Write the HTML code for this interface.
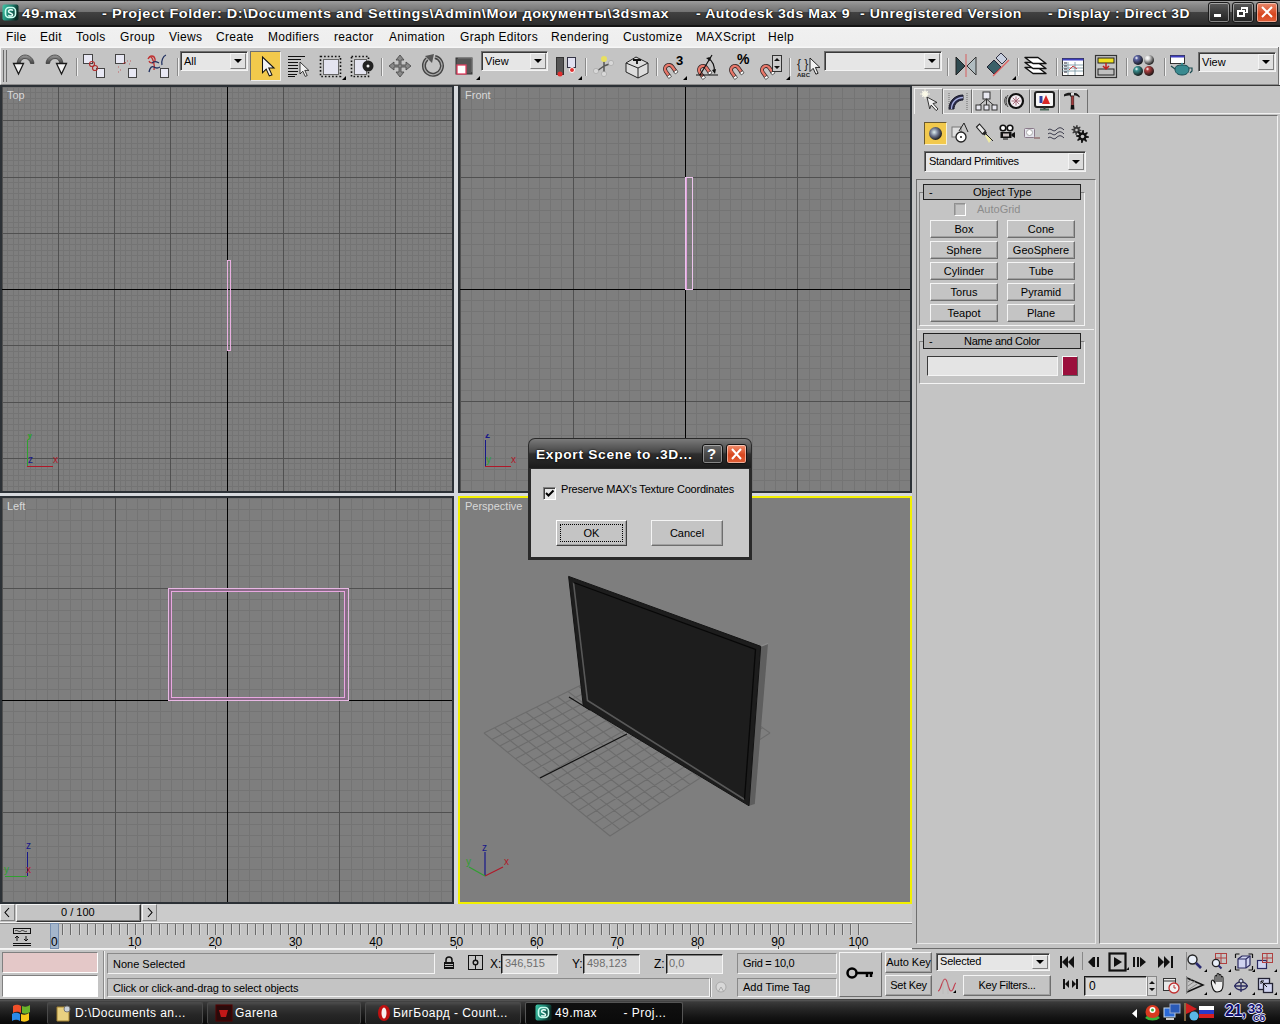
<!DOCTYPE html><html><head><meta charset="utf-8"><style>
html,body{margin:0;padding:0;width:1280px;height:1024px;overflow:hidden;background:#c4c4c4;font-family:"Liberation Sans", sans-serif;position:relative}
div{box-sizing:border-box}
.btn{position:absolute;background:#c4c4c4;border:1px solid;border-color:#f4f4f4 #6e6e6e #6e6e6e #f4f4f4;box-shadow:inset -1px -1px 0 #a0a0a0;font-size:11px;text-align:center;color:#000;white-space:pre}
.sunk{position:absolute;border:1px solid;border-color:#808080 #ffffff #ffffff #808080;box-shadow:inset 1px 1px 0 #404040}
</style></head><body>
<div style="position:absolute;left:0px;top:0px;width:1280px;height:27px;background:linear-gradient(#111 0px,#111 1px,#9c9c9c 1px,#8a8a8a 5px,#727272 12px,#424242 12px,#2c2c2c 25px,#141414 25px,#141414 27px)"></div>
<svg style="position:absolute;left:2px;top:4px" width="17" height="17"><defs><linearGradient id="ai" x1="0" y1="0" x2="1" y2="0.3"><stop offset="0" stop-color="#40c8a8"/><stop offset="0.6" stop-color="#1a7a6a"/><stop offset="1" stop-color="#0a2a24"/></linearGradient></defs><rect x="0.5" y="0.5" width="16" height="16" rx="2" fill="url(#ai)"/><rect x="3.5" y="3.5" width="10" height="10" rx="3.5" fill="none" stroke="#c8fff0" stroke-width="1.6"/><path d="M11 6.5c-1-1-4-1-4.5 0.8s3.5 1.5 4 3.2-2.5 2-4.2 0.8" fill="none" stroke="#e8fff8" stroke-width="1.5"/></svg>
<div style="position:absolute;left:22px;top:7px;font-size:13px;font-weight:700;color:#fff;white-space:pre;line-height:14px;letter-spacing:0.5px;text-shadow:0 0 1px #000,0 0 2px #000;transform-origin:0 0;transform:scaleX(1.16)">49.max</div>
<div style="position:absolute;left:102px;top:7px;font-size:13px;font-weight:700;color:#fff;white-space:pre;line-height:14px;letter-spacing:0.5px;text-shadow:0 0 1px #000,0 0 2px #000;transform-origin:0 0;transform:scaleX(1.112)">- Project Folder: D:\Documents and Settings\Admin\Мои документы\3dsmax</div>
<div style="position:absolute;left:696px;top:7px;font-size:13px;font-weight:700;color:#fff;white-space:pre;line-height:14px;letter-spacing:0.5px;text-shadow:0 0 1px #000,0 0 2px #000;transform-origin:0 0;transform:scaleX(1.081)">- Autodesk 3ds Max 9</div>
<div style="position:absolute;left:860px;top:7px;font-size:13px;font-weight:700;color:#fff;white-space:pre;line-height:14px;letter-spacing:0.5px;text-shadow:0 0 1px #000,0 0 2px #000;transform-origin:0 0;transform:scaleX(1.082)">- Unregistered Version</div>
<div style="position:absolute;left:1048px;top:7px;font-size:13px;font-weight:700;color:#fff;white-space:pre;line-height:14px;letter-spacing:0.5px;text-shadow:0 0 1px #000,0 0 2px #000;transform-origin:0 0;transform:scaleX(1.065)">- Display : Direct 3D</div>
<div style="position:absolute;left:1208px;top:2px;width:22px;height:21px;background:linear-gradient(#5a5a5a,#3a3a3a 50%,#222);border:1px solid #1a1a1a;border-radius:3px;box-shadow:inset 0 0 0 1px rgba(255,255,255,0.45)"><div style="position:absolute;left:5px;top:11px;width:7px;height:3px;background:#fff"></div></div>
<div style="position:absolute;left:1232px;top:2px;width:22px;height:21px;background:linear-gradient(#5a5a5a,#3a3a3a 50%,#222);border:1px solid #1a1a1a;border-radius:3px;box-shadow:inset 0 0 0 1px rgba(255,255,255,0.45)"><div style="position:absolute;left:8px;top:4px;width:7px;height:6px;border:2px solid #fff;border-left-width:1px;border-bottom-width:1px"></div><div style="position:absolute;left:4px;top:7px;width:8px;height:7px;border:2px solid #fff;border-top-width:2px;background:#333"></div></div>
<div style="position:absolute;left:1256px;top:2px;width:22px;height:21px;background:linear-gradient(#e88a6e,#d8461e 60%,#e0603a);border:1px solid #1a1a1a;border-radius:3px;box-shadow:inset 0 0 0 1px rgba(255,255,255,0.45)"><svg width="21" height="20" style="position:absolute;left:0;top:0"><path d="M5 4L15 14M15 4L5 14" stroke="#fff" stroke-width="2"/></svg></div>
<div style="position:absolute;left:0px;top:27px;width:1280px;height:21px;background:linear-gradient(#fafafa 0px,#f0f0f0 2px,#eeeeee 19px,#f6f6f6 20px)"></div>
<div style="position:absolute;left:6px;top:31px;font-size:12px;color:#000;font-weight:400;white-space:pre;line-height:1;letter-spacing:0.3px">File</div>
<div style="position:absolute;left:40px;top:31px;font-size:12px;color:#000;font-weight:400;white-space:pre;line-height:1;letter-spacing:0.3px">Edit</div>
<div style="position:absolute;left:76px;top:31px;font-size:12px;color:#000;font-weight:400;white-space:pre;line-height:1;letter-spacing:0.3px">Tools</div>
<div style="position:absolute;left:120px;top:31px;font-size:12px;color:#000;font-weight:400;white-space:pre;line-height:1;letter-spacing:0.3px">Group</div>
<div style="position:absolute;left:169px;top:31px;font-size:12px;color:#000;font-weight:400;white-space:pre;line-height:1;letter-spacing:0.3px">Views</div>
<div style="position:absolute;left:216px;top:31px;font-size:12px;color:#000;font-weight:400;white-space:pre;line-height:1;letter-spacing:0.3px">Create</div>
<div style="position:absolute;left:268px;top:31px;font-size:12px;color:#000;font-weight:400;white-space:pre;line-height:1;letter-spacing:0.3px">Modifiers</div>
<div style="position:absolute;left:334px;top:31px;font-size:12px;color:#000;font-weight:400;white-space:pre;line-height:1;letter-spacing:0.3px">reactor</div>
<div style="position:absolute;left:389px;top:31px;font-size:12px;color:#000;font-weight:400;white-space:pre;line-height:1;letter-spacing:0.3px">Animation</div>
<div style="position:absolute;left:460px;top:31px;font-size:12px;color:#000;font-weight:400;white-space:pre;line-height:1;letter-spacing:0.3px">Graph Editors</div>
<div style="position:absolute;left:551px;top:31px;font-size:12px;color:#000;font-weight:400;white-space:pre;line-height:1;letter-spacing:0.3px">Rendering</div>
<div style="position:absolute;left:623px;top:31px;font-size:12px;color:#000;font-weight:400;white-space:pre;line-height:1;letter-spacing:0.3px">Customize</div>
<div style="position:absolute;left:696px;top:31px;font-size:12px;color:#000;font-weight:400;white-space:pre;line-height:1;letter-spacing:0.3px">MAXScript</div>
<div style="position:absolute;left:768px;top:31px;font-size:12px;color:#000;font-weight:400;white-space:pre;line-height:1;letter-spacing:0.3px">Help</div>
<div style="position:absolute;left:0px;top:48px;width:1280px;height:37px;background:#c4c4c4;border-left:1px solid #f4f4f4;border-bottom:1px solid #8c8c8c"></div>
<div style="position:absolute;left:1278px;top:47px;width:1px;height:38px;background:#707070"></div>
<div style="position:absolute;left:1279px;top:47px;width:1px;height:38px;background:#f0f0f0"></div>
<div style="position:absolute;left:3px;top:50px;width:1px;height:32px;background:#6a6a6a"></div>
<div style="position:absolute;left:6px;top:50px;width:1px;height:32px;background:#6a6a6a"></div>
<div style="position:absolute;left:76px;top:58px;width:1px;height:18px;background:#8a8a8a;box-shadow:1px 0 0 #f0f0f0"></div>
<div style="position:absolute;left:177px;top:58px;width:1px;height:18px;background:#8a8a8a;box-shadow:1px 0 0 #f0f0f0"></div>
<div style="position:absolute;left:381px;top:58px;width:1px;height:18px;background:#8a8a8a;box-shadow:1px 0 0 #f0f0f0"></div>
<div style="position:absolute;left:585px;top:58px;width:1px;height:18px;background:#8a8a8a;box-shadow:1px 0 0 #f0f0f0"></div>
<div style="position:absolute;left:656px;top:58px;width:1px;height:18px;background:#8a8a8a;box-shadow:1px 0 0 #f0f0f0"></div>
<div style="position:absolute;left:789px;top:58px;width:1px;height:18px;background:#8a8a8a;box-shadow:1px 0 0 #f0f0f0"></div>
<div style="position:absolute;left:947px;top:58px;width:1px;height:18px;background:#8a8a8a;box-shadow:1px 0 0 #f0f0f0"></div>
<div style="position:absolute;left:1017px;top:58px;width:1px;height:18px;background:#8a8a8a;box-shadow:1px 0 0 #f0f0f0"></div>
<div style="position:absolute;left:1056px;top:58px;width:1px;height:18px;background:#8a8a8a;box-shadow:1px 0 0 #f0f0f0"></div>
<div style="position:absolute;left:1126px;top:58px;width:1px;height:18px;background:#8a8a8a;box-shadow:1px 0 0 #f0f0f0"></div>
<div style="position:absolute;left:1164px;top:58px;width:1px;height:18px;background:#8a8a8a;box-shadow:1px 0 0 #f0f0f0"></div>
<div style="position:absolute;left:180px;top:51px;width:68px;height:20px;background:#e6e6e6;border:1px solid;border-color:#6e6e6e #f4f4f4 #f4f4f4 #6e6e6e;box-shadow:inset 1px 1px 0 #3a3a3a"></div>
<div style="position:absolute;left:184px;top:56px;font-size:11px;color:#000;font-weight:400;white-space:pre;line-height:1;">All</div>
<div style="position:absolute;left:230px;top:53px;width:16px;height:16px;background:#e0e0e0;border:1px solid;border-color:#f4f4f4 #808080 #808080 #f4f4f4"><svg width="14" height="14" style="position:absolute;left:0;top:0"><path d="M3 5h8l-4 4z" fill="#000"/></svg></div>
<div style="position:absolute;left:481px;top:51px;width:67px;height:20px;background:#e6e6e6;border:1px solid;border-color:#6e6e6e #f4f4f4 #f4f4f4 #6e6e6e;box-shadow:inset 1px 1px 0 #3a3a3a"></div>
<div style="position:absolute;left:485px;top:56px;font-size:11px;color:#000;font-weight:400;white-space:pre;line-height:1;">View</div>
<div style="position:absolute;left:530px;top:53px;width:16px;height:16px;background:#e0e0e0;border:1px solid;border-color:#f4f4f4 #808080 #808080 #f4f4f4"><svg width="14" height="14" style="position:absolute;left:0;top:0"><path d="M3 5h8l-4 4z" fill="#000"/></svg></div>
<div style="position:absolute;left:824px;top:51px;width:118px;height:20px;background:#e6e6e6;border:1px solid;border-color:#6e6e6e #f4f4f4 #f4f4f4 #6e6e6e;box-shadow:inset 1px 1px 0 #3a3a3a"></div>
<div style="position:absolute;left:924px;top:53px;width:16px;height:16px;background:#e0e0e0;border:1px solid;border-color:#f4f4f4 #808080 #808080 #f4f4f4"><svg width="14" height="14" style="position:absolute;left:0;top:0"><path d="M3 5h8l-4 4z" fill="#000"/></svg></div>
<div style="position:absolute;left:1198px;top:52px;width:78px;height:20px;background:#e6e6e6;border:1px solid;border-color:#6e6e6e #f4f4f4 #f4f4f4 #6e6e6e;box-shadow:inset 1px 1px 0 #3a3a3a"></div>
<div style="position:absolute;left:1202px;top:57px;font-size:11px;color:#000;font-weight:400;white-space:pre;line-height:1;">View</div>
<div style="position:absolute;left:1258px;top:54px;width:16px;height:16px;background:#e0e0e0;border:1px solid;border-color:#f4f4f4 #808080 #808080 #f4f4f4"><svg width="14" height="14" style="position:absolute;left:0;top:0"><path d="M3 5h8l-4 4z" fill="#000"/></svg></div>
<div style="position:absolute;left:250px;top:51px;width:31px;height:30px;background:#f2c94c;border-left:1px solid #6f6f6f;border-top:1px solid #6f6f6f;border-right:1px solid #eee;border-bottom:1px solid #eee"></div>
<svg style="position:absolute;left:0;top:47px" width="1280" height="38"><path d="M346 29v4h-4z" fill="#000"/><path d="M480 29v4h-4z" fill="#000"/><path d="M582 29v4h-4z" fill="#000"/><path d="M687 29v4h-4z" fill="#000"/><path d="M790 29v4h-4z" fill="#000"/><path d="M1016 29v4h-4z" fill="#000"/><g transform="translate(13,0)"><defs><linearGradient id="ag13" x1="0" y1="0" x2="0" y2="1"><stop offset="0" stop-color="#9a9a9a"/><stop offset="1" stop-color="#3a3a3a"/></linearGradient></defs><path d="M4 17.5c0-6 4-9.5 8-9.5s8.5 3 9 8.5h-3.5c-0.5-3-2.5-5-5.5-5s-4.5 2-5 6z" fill="url(#ag13)" stroke="#333" stroke-width="0.7"/><path d="M0.5 16.5h10l-5 10.5z" fill="#f2f2f2" stroke="#1a1a1a" stroke-width="1.3" stroke-linejoin="miter"/></g><g transform="translate(45,0) translate(22,0) scale(-1,1)"><defs><linearGradient id="ag45" x1="0" y1="0" x2="0" y2="1"><stop offset="0" stop-color="#9a9a9a"/><stop offset="1" stop-color="#3a3a3a"/></linearGradient></defs><path d="M4 17.5c0-6 4-9.5 8-9.5s8.5 3 9 8.5h-3.5c-0.5-3-2.5-5-5.5-5s-4.5 2-5 6z" fill="url(#ag45)" stroke="#333" stroke-width="0.7"/><path d="M0.5 16.5h10l-5 10.5z" fill="#f2f2f2" stroke="#1a1a1a" stroke-width="1.3" stroke-linejoin="miter"/></g><g><rect x="83.5" y="7.5" width="9" height="9" fill="#e8e8f4" stroke="#444"/><rect x="96.5" y="21.5" width="8" height="9" fill="#e8e8f4" stroke="#444"/><circle cx="92" cy="17" r="2.5" fill="none" stroke="#b03030" stroke-width="1.2"/><circle cx="95" cy="21" r="2.5" fill="none" stroke="#b03030" stroke-width="1.2"/></g><g><rect x="115.5" y="7.5" width="9" height="9" fill="#e8e8f4" stroke="#444"/><rect x="128.5" y="21.5" width="8" height="9" fill="#e8e8f4" stroke="#444"/><path d="M123 17a2 2 0 0 1 3 -1" stroke="#a03030" fill="none"/><path d="M127 14h1M130 14h1M129 17h1M118 20h1M120 23h1M118 25h1" stroke="#c06060"/></g><g fill="none" stroke-width="1.3"><path d="M148 12c2-4 6-4 7 0s-5 5-6 2M150 9c3 2 5 8 4 14" stroke="#c03030"/><path d="M149 25c1-5 3-6 5-5s3 2 6 0M152 16c3-3 5-1 7 0M162 18c-1-4 1-9 4-10" stroke="#203060"/></g><rect x="160.5" y="21.5" width="8" height="9" fill="#e8e8f4" stroke="#444"/><path transform="translate(262.5,10) scale(1.05)" d="M0 0l0 15 3.5-3.5 3 6.5 2.5-1-3-6.5h5z" fill="#f2f2f2" stroke="#111" stroke-width="1"/><path d="M288 9.5h17M288 12.5h13M288 15.5h10M288 18.5h10M288 21.5h10M288 24.5h10M288 27.5h9M288 29.5h7" stroke="#111" stroke-width="1.2"/><path transform="translate(300,15) scale(0.8)" d="M0 0l0 15 3.5-3.5 3 6.5 2.5-1-3-6.5h5z" fill="#f2f2f2" stroke="#111" stroke-width="1"/><rect x="320.5" y="9.5" width="20" height="20" fill="none" stroke="#111" stroke-width="1.6" stroke-dasharray="1.6 2"/><rect x="323.5" y="12.5" width="15" height="15" fill="#e4e4f0" stroke="#666"/><rect x="351.5" y="9.5" width="17" height="20" fill="none" stroke="#111" stroke-width="1.6" stroke-dasharray="1.6 2"/><rect x="354.5" y="12.5" width="12" height="15" fill="#e4e4f0" stroke="#666"/><circle cx="368" cy="19" r="5.5" fill="#222"/><circle cx="368" cy="19" r="1.5" fill="#eee"/><g fill="#888" stroke="#444" stroke-width="0.8"><path d="M400 8l-4 5h3v5h-5v-3l-5 4 5 4v-3h5v5h-3l4 5 4-5h-3v-5h5v3l5-4-5-4v3h-5v-5h3z"/></g><path d="M427 12a9 9 0 1 0 8 -2" fill="none" stroke="#444" stroke-width="4"/><path d="M427 12a9 9 0 1 0 8 -2" fill="none" stroke="#aaa" stroke-width="1.2"/><path d="M425 9l9-2-2 9z" fill="#555"/><rect x="456" y="11" width="16" height="16" fill="#555" stroke="#333"/><path d="M458 11h14v14" fill="none" stroke="#888"/><rect x="457" y="18" width="9" height="9" fill="#fff" stroke="#e04060" stroke-width="1.3"/><rect x="556.5" y="10.5" width="7" height="17" fill="#555" stroke="#333"/><rect x="567.5" y="10.5" width="8" height="10" fill="#e0e0f0" stroke="#334"/><circle cx="560" cy="27" r="2.5" fill="#e03030"/><circle cx="572" cy="23" r="2.5" fill="#e03030" stroke="#fff"/><g stroke="#555" stroke-width="1.5"><path d="M604 19l-7 5M604 19l8-3M604 19v7M604 19v-6"/></g><circle cx="604" cy="12" r="3" fill="#e8e060"/><circle cx="596" cy="24" r="2.6" fill="#d8d8d8" stroke="#999" stroke-width="0.5"/><circle cx="611" cy="16" r="2.6" fill="#d8d8d8" stroke="#999" stroke-width="0.5"/><circle cx="604" cy="27" r="2.6" fill="#d8d8d8" stroke="#999" stroke-width="0.5"/><path d="M626 16l10-6 12 6v10l-10 5-12-6z" fill="#ddd" stroke="#222"/><path d="M626 16l12 5 10-5M638 21v10" fill="none" stroke="#222"/><path d="M633 13h8M637 13v4" stroke="#111" stroke-width="1.8"/><g transform="translate(661,13) rotate(-35 8 9)"><path d="M4 15v-6a4 4 0 0 1 8 0v6" fill="none" stroke="#3a2a2a" stroke-width="4"/><path d="M4 15v-6a4 4 0 0 1 8 0v6" fill="none" stroke="#e8786a" stroke-width="2.4"/><rect x="2.3" y="14" width="3.4" height="2.6" fill="#fff" stroke="#222" stroke-width="0.6"/><rect x="10.3" y="14" width="3.4" height="2.6" fill="#fff" stroke="#222" stroke-width="0.6"/></g><text x="676" y="18" font-size="13" font-weight="700" font-family="Liberation Sans" fill="#000">3</text><g transform="translate(695,14) rotate(-35 8 9)"><path d="M4 15v-6a4 4 0 0 1 8 0v6" fill="none" stroke="#3a2a2a" stroke-width="4"/><path d="M4 15v-6a4 4 0 0 1 8 0v6" fill="none" stroke="#e8786a" stroke-width="2.4"/><rect x="2.3" y="14" width="3.4" height="2.6" fill="#fff" stroke="#222" stroke-width="0.6"/><rect x="10.3" y="14" width="3.4" height="2.6" fill="#fff" stroke="#222" stroke-width="0.6"/></g><path d="M696 28h22M700 28l12-20M708 11a13 13 0 0 1 6 14" fill="none" stroke="#111" stroke-width="1.2"/><path d="M706 11l5-1-1 4zM712 23l3 4 1-5z" fill="#111"/><g transform="translate(727,14) rotate(-35 8 9)"><path d="M4 15v-6a4 4 0 0 1 8 0v6" fill="none" stroke="#3a2a2a" stroke-width="4"/><path d="M4 15v-6a4 4 0 0 1 8 0v6" fill="none" stroke="#e8786a" stroke-width="2.4"/><rect x="2.3" y="14" width="3.4" height="2.6" fill="#fff" stroke="#222" stroke-width="0.6"/><rect x="10.3" y="14" width="3.4" height="2.6" fill="#fff" stroke="#222" stroke-width="0.6"/></g><text x="737" y="17" font-size="14" font-weight="700" font-family="Liberation Sans" fill="#000">%</text><g transform="translate(758,14) rotate(-35 8 9)"><path d="M4 15v-6a4 4 0 0 1 8 0v6" fill="none" stroke="#3a2a2a" stroke-width="4"/><path d="M4 15v-6a4 4 0 0 1 8 0v6" fill="none" stroke="#e8786a" stroke-width="2.4"/><rect x="2.3" y="14" width="3.4" height="2.6" fill="#fff" stroke="#222" stroke-width="0.6"/><rect x="10.3" y="14" width="3.4" height="2.6" fill="#fff" stroke="#222" stroke-width="0.6"/></g><rect x="772.5" y="8.5" width="9" height="16" fill="#ccc" stroke="#333"/><path d="M774 14l3-3 3 3zM774 19l3 3 3-3z" fill="#111"/><text x="797" y="21" font-size="12" font-family="Liberation Sans" fill="#222">{ }</text><text x="797" y="30" font-size="6" font-weight="700" font-family="Liberation Sans" fill="#222">ABC</text><path transform="translate(810,11) scale(0.9)" d="M0 0l0 15 3.5-3.5 3 6.5 2.5-1-3-6.5h5z" fill="#f2f2f2" stroke="#111" stroke-width="1"/><path d="M956 10l9 9-9 9z" fill="#2f4a50" stroke="#222"/><path d="M976 10l-9 9 9 9z" fill="#b0bcc0" stroke="#333"/><path d="M966 7v23" stroke="#d08080" stroke-width="1.5"/><path d="M987 20l7-7 7 7-7 7z" fill="#3a6068" stroke="#223"/><path d="M996 11l5-5 6 6-5 5z" fill="#c8d0e0" stroke="#334"/><path d="M993 29l16-16" stroke="#e06060" stroke-width="1.2"/><g fill="#fff" stroke="#111" stroke-width="1.4" stroke-linejoin="round"><path d="M1025 20.5h13l8 6h-13z"/><path d="M1025 15.5h13l8 6h-13z"/><path d="M1025 10.5h13l8 6h-13z"/></g><rect x="1062.5" y="11.5" width="21" height="17" fill="#fff" stroke="#333"/><rect x="1062.5" y="11.5" width="21" height="2" fill="#4040c0"/><path d="M1068 15v13M1075 15v13M1062 18h21M1062 21h21M1062 24h21" stroke="#7090a0" stroke-width="0.8"/><path d="M1069 23l4-4 4 3" stroke="#d04040" fill="none"/><path d="M1064 16h3M1064 19h3M1064 22h3M1064 25h3" stroke="#223" stroke-width="1.2"/><rect x="1095.5" y="8.5" width="21" height="22" fill="none" stroke="#333" stroke-width="1.2"/><rect x="1098" y="11" width="16" height="5" fill="#f0e020" stroke="#222"/><rect x="1098" y="22" width="16" height="6" fill="#c0c0c0" stroke="#222"/><path d="M1106 16v5M1103 19l3 3 3-3" stroke="#c02020" stroke-width="1.5" fill="none"/><defs><radialGradient id="ms0" cx="0.35" cy="0.3" r="0.75"><stop offset="0" stop-color="#fff"/><stop offset="0.25" stop-color="#5a62a0"/><stop offset="1" stop-color="#111"/></radialGradient><radialGradient id="ms1" cx="0.35" cy="0.3" r="0.75"><stop offset="0" stop-color="#fff"/><stop offset="0.25" stop-color="#e0e0e0"/><stop offset="1" stop-color="#111"/></radialGradient><radialGradient id="ms2" cx="0.35" cy="0.3" r="0.75"><stop offset="0" stop-color="#fff"/><stop offset="0.25" stop-color="#3a9090"/><stop offset="1" stop-color="#111"/></radialGradient><radialGradient id="ms3" cx="0.35" cy="0.3" r="0.75"><stop offset="0" stop-color="#fff"/><stop offset="0.25" stop-color="#b04040"/><stop offset="1" stop-color="#111"/></radialGradient></defs><circle cx="1138" cy="13" r="5" fill="url(#ms0)"/><circle cx="1149" cy="13" r="5" fill="url(#ms1)"/><circle cx="1138" cy="24" r="5" fill="url(#ms2)"/><circle cx="1149" cy="24" r="5" fill="url(#ms3)"/><rect x="1170.5" y="8.5" width="14" height="8" fill="#fff" stroke="#333"/><rect x="1170.5" y="8.5" width="14" height="2" fill="#4040c0"/><path d="M1175 22c0-3 3-4 7-4s7 1 7 4c0 4-3 6-7 6s-7-2-7-6z" fill="#3a8a90" stroke="#1a4a50"/><path d="M1175 22l-4-3M1189 21l3 0 0 3-2 2" stroke="#1a4a50" fill="none" stroke-width="1.2"/><circle cx="1182" cy="17" r="1.2" fill="#3a8a90"/></svg>
<div style="position:absolute;left:0px;top:85px;width:912px;height:820px;background:#d6d9dd"></div>
<div style="position:absolute;left:0px;top:85px;width:1280px;height:1px;background:#3a3a3a"></div>
<div style="position:absolute;left:0px;top:85px;width:454px;height:408px;background:#2c3136"></div>
<div style="position:absolute;left:458px;top:85px;width:454px;height:408px;background:#2c3136"></div>
<div style="position:absolute;left:0px;top:496px;width:454px;height:408px;background:#2c3136"></div>
<div style="position:absolute;left:458px;top:496px;width:454px;height:408px;background:#f2f000"></div>
<svg style="position:absolute;left:2px;top:87px" width="450" height="404" shape-rendering="crispEdges"><rect width="450" height="404" fill="#7e7e7e"/><path d="M5.5 0V404M11.5 0V404M16.5 0V404M22.5 0V404M28.5 0V404M33.5 0V404M39.5 0V404M45.5 0V404M50.5 0V404M61.5 0V404M67.5 0V404M73.5 0V404M78.5 0V404M84.5 0V404M90.5 0V404M95.5 0V404M101.5 0V404M106.5 0V404M118.5 0V404M123.5 0V404M129.5 0V404M135.5 0V404M140.5 0V404M146.5 0V404M151.5 0V404M157.5 0V404M163.5 0V404M174.5 0V404M180.5 0V404M185.5 0V404M191.5 0V404M196.5 0V404M202.5 0V404M208.5 0V404M213.5 0V404M219.5 0V404M230.5 0V404M236.5 0V404M241.5 0V404M247.5 0V404M253.5 0V404M258.5 0V404M264.5 0V404M270.5 0V404M275.5 0V404M286.5 0V404M292.5 0V404M298.5 0V404M303.5 0V404M309.5 0V404M315.5 0V404M320.5 0V404M326.5 0V404M331.5 0V404M343.5 0V404M348.5 0V404M354.5 0V404M360.5 0V404M365.5 0V404M371.5 0V404M376.5 0V404M382.5 0V404M388.5 0V404M399.5 0V404M405.5 0V404M410.5 0V404M416.5 0V404M421.5 0V404M427.5 0V404M433.5 0V404M438.5 0V404M444.5 0V404M0 0.5H450M0 5.5H450M0 11.5H450M0 16.5H450M0 22.5H450M0 28.5H450M0 39.5H450M0 45.5H450M0 50.5H450M0 56.5H450M0 61.5H450M0 67.5H450M0 73.5H450M0 78.5H450M0 84.5H450M0 95.5H450M0 101.5H450M0 106.5H450M0 112.5H450M0 118.5H450M0 123.5H450M0 129.5H450M0 135.5H450M0 140.5H450M0 151.5H450M0 157.5H450M0 163.5H450M0 168.5H450M0 174.5H450M0 180.5H450M0 185.5H450M0 191.5H450M0 196.5H450M0 208.5H450M0 213.5H450M0 219.5H450M0 225.5H450M0 230.5H450M0 236.5H450M0 241.5H450M0 247.5H450M0 253.5H450M0 264.5H450M0 270.5H450M0 275.5H450M0 281.5H450M0 286.5H450M0 292.5H450M0 298.5H450M0 303.5H450M0 309.5H450M0 320.5H450M0 326.5H450M0 331.5H450M0 337.5H450M0 343.5H450M0 348.5H450M0 354.5H450M0 360.5H450M0 365.5H450M0 376.5H450M0 382.5H450M0 388.5H450M0 393.5H450M0 399.5H450" stroke="#747474" stroke-width="1" fill="none"/><path d="M0.5 0V404M56.5 0V404M112.5 0V404M168.5 0V404M281.5 0V404M337.5 0V404M393.5 0V404M0 33.5H450M0 90.5H450M0 146.5H450M0 258.5H450M0 315.5H450M0 371.5H450" stroke="#505050" stroke-width="1" fill="none"/><path d="M225.5 0V404M0 202.5H450" stroke="#000" stroke-width="1" fill="none"/></svg>
<svg style="position:absolute;left:460px;top:87px" width="450" height="404" shape-rendering="crispEdges"><rect width="450" height="404" fill="#7e7e7e"/><path d="M11.5 0V404M23.5 0V404M34.5 0V404M45.5 0V404M56.5 0V404M68.5 0V404M79.5 0V404M90.5 0V404M101.5 0V404M124.5 0V404M135.5 0V404M146.5 0V404M158.5 0V404M169.5 0V404M180.5 0V404M191.5 0V404M203.5 0V404M214.5 0V404M236.5 0V404M247.5 0V404M259.5 0V404M270.5 0V404M281.5 0V404M292.5 0V404M304.5 0V404M315.5 0V404M326.5 0V404M349.5 0V404M360.5 0V404M371.5 0V404M382.5 0V404M394.5 0V404M405.5 0V404M416.5 0V404M427.5 0V404M439.5 0V404M0 0.5H450M0 11.5H450M0 22.5H450M0 33.5H450M0 45.5H450M0 56.5H450M0 67.5H450M0 78.5H450M0 101.5H450M0 112.5H450M0 123.5H450M0 135.5H450M0 146.5H450M0 157.5H450M0 168.5H450M0 180.5H450M0 191.5H450M0 213.5H450M0 224.5H450M0 236.5H450M0 247.5H450M0 258.5H450M0 269.5H450M0 281.5H450M0 292.5H450M0 303.5H450M0 326.5H450M0 337.5H450M0 348.5H450M0 359.5H450M0 371.5H450M0 382.5H450M0 393.5H450" stroke="#747474" stroke-width="1" fill="none"/><path d="M0.5 0V404M113.5 0V404M337.5 0V404M0 90.5H450M0 314.5H450" stroke="#505050" stroke-width="1" fill="none"/><path d="M225.5 0V404M0 202.5H450" stroke="#000" stroke-width="1" fill="none"/></svg>
<svg style="position:absolute;left:2px;top:498px" width="450" height="404" shape-rendering="crispEdges"><rect width="450" height="404" fill="#7e7e7e"/><path d="M11.5 0V404M23.5 0V404M34.5 0V404M45.5 0V404M56.5 0V404M68.5 0V404M79.5 0V404M90.5 0V404M101.5 0V404M124.5 0V404M135.5 0V404M146.5 0V404M158.5 0V404M169.5 0V404M180.5 0V404M191.5 0V404M203.5 0V404M214.5 0V404M236.5 0V404M247.5 0V404M259.5 0V404M270.5 0V404M281.5 0V404M292.5 0V404M304.5 0V404M315.5 0V404M326.5 0V404M349.5 0V404M360.5 0V404M371.5 0V404M382.5 0V404M394.5 0V404M405.5 0V404M416.5 0V404M427.5 0V404M439.5 0V404M0 0.5H450M0 11.5H450M0 22.5H450M0 33.5H450M0 45.5H450M0 56.5H450M0 67.5H450M0 78.5H450M0 101.5H450M0 112.5H450M0 123.5H450M0 135.5H450M0 146.5H450M0 157.5H450M0 168.5H450M0 180.5H450M0 191.5H450M0 213.5H450M0 224.5H450M0 236.5H450M0 247.5H450M0 258.5H450M0 269.5H450M0 281.5H450M0 292.5H450M0 303.5H450M0 326.5H450M0 337.5H450M0 348.5H450M0 359.5H450M0 371.5H450M0 382.5H450M0 393.5H450" stroke="#747474" stroke-width="1" fill="none"/><path d="M0.5 0V404M113.5 0V404M337.5 0V404M0 90.5H450M0 314.5H450" stroke="#505050" stroke-width="1" fill="none"/><path d="M225.5 0V404M0 202.5H450" stroke="#000" stroke-width="1" fill="none"/></svg>
<div style="position:absolute;left:460px;top:498px;width:450px;height:404px;background:#7e7e7e"></div>
<div style="position:absolute;left:7px;top:90px;font-size:11px;color:#d8d8d8;font-weight:400;white-space:pre;line-height:1;">Top</div>
<div style="position:absolute;left:465px;top:90px;font-size:11px;color:#d8d8d8;font-weight:400;white-space:pre;line-height:1;">Front</div>
<div style="position:absolute;left:7px;top:501px;font-size:11px;color:#d8d8d8;font-weight:400;white-space:pre;line-height:1;">Left</div>
<div style="position:absolute;left:465px;top:501px;font-size:11px;color:#d8d8d8;font-weight:400;white-space:pre;line-height:1;">Perspective</div>
<div style="position:absolute;left:912px;top:86px;width:368px;height:864px;background:#c4c4c4"></div>
<div style="position:absolute;left:914px;top:88px;width:29px;height:26px;border-left:1px solid #f0f0f0;border-top:1px solid #f0f0f0;border-right:1px solid #707070"></div>
<div style="position:absolute;left:943px;top:89px;width:29px;height:25px;border-left:1px solid #f0f0f0;border-top:1px solid #f0f0f0;border-right:1px solid #707070"></div>
<div style="position:absolute;left:972px;top:89px;width:29px;height:25px;border-left:1px solid #f0f0f0;border-top:1px solid #f0f0f0;border-right:1px solid #707070"></div>
<div style="position:absolute;left:1001px;top:89px;width:29px;height:25px;border-left:1px solid #f0f0f0;border-top:1px solid #f0f0f0;border-right:1px solid #707070"></div>
<div style="position:absolute;left:1030px;top:89px;width:29px;height:25px;border-left:1px solid #f0f0f0;border-top:1px solid #f0f0f0;border-right:1px solid #707070"></div>
<div style="position:absolute;left:1059px;top:89px;width:29px;height:25px;border-left:1px solid #f0f0f0;border-top:1px solid #f0f0f0;border-right:1px solid #707070"></div>
<div style="position:absolute;left:943px;top:113px;width:337px;height:1px;background:#f0f0f0"></div>
<div style="position:absolute;left:916px;top:179px;width:180px;height:765px;border-left:1px solid #6e6e6e;border-top:1px solid #6e6e6e;border-right:1px solid #e8e8e8;border-bottom:1px solid #e8e8e8"></div>
<div style="position:absolute;left:1099px;top:115px;width:179px;height:829px;border-left:1px solid #6e6e6e;border-top:1px solid #6e6e6e;border-right:1px solid #f2f2f2;border-bottom:1px solid #f2f2f2"></div>
<div style="position:absolute;left:912px;top:948px;width:368px;height:1px;background:#6e6e6e"></div>
<svg style="position:absolute;left:914px;top:88px" width="174" height="26">
<g transform="translate(0,0)">
 <circle cx="11" cy="6" r="3" fill="#fffff0" opacity="0.8"/><path d="M6 6h10M11 1v10M8 3l6 6M14 3l-6 6" stroke="#fffde8" stroke-width="0.8"/>
 <path d="M13 9l10 5.5-4 1 5 5.5-1.8 1.6-5-5.5-1.5 3.8z" fill="#f0f0f0" stroke="#222" stroke-width="0.9" stroke-linejoin="round"/>
</g>
<g transform="translate(29,0)">
 <path d="M6 21c0-8 6-14 14-14v5c-5 0-9 4-9 9z" fill="#2a2a48" stroke="#1a1a2a"/>
 <path d="M8.5 21c0-6.5 5-11.5 11.5-11.5" stroke="#a8b0e0" stroke-width="1.3" fill="none"/>
 <path d="M6 5v17M24 5v17" stroke="#333" stroke-width="0.6" stroke-dasharray="1 1"/>
</g>
<g transform="translate(58,0)">
 <rect x="11" y="4" width="7" height="7" fill="#e8e8f0" stroke="#333"/>
 <path d="M14.5 11l-8 7M14.5 11v7M14.5 11l8 7" stroke="#333"/>
 <rect x="4" y="17" width="5" height="5" fill="#e8e8f0" stroke="#333"/><rect x="12" y="17" width="5" height="5" fill="#e8e8f0" stroke="#333"/><rect x="20" y="17" width="5" height="5" fill="#e8e8f0" stroke="#333"/>
</g>
<g transform="translate(87,0)"><circle cx="15" cy="13" r="7" fill="#f4f0f4" stroke="#111" stroke-width="2.2"/><path d="M15 8.5v9M10.5 13h9M11.8 9.8l6.4 6.4M18.2 9.8l-6.4 6.4" stroke="#a06070" stroke-width="0.9"/><path d="M7 7c-2.5 4-2.5 8 0 12M5 8.5c-1.8 3-1.8 6 0 9" stroke="#333" fill="none" stroke-width="0.9"/></g>
<g transform="translate(116,0)"><rect x="5" y="4" width="19" height="15" rx="2" fill="#f8f8f8" stroke="#222" stroke-width="2"/><path d="M9.5 8h3v7h-3z" fill="#3040a0"/><path d="M12 16l4-9 4 9z" fill="#d82828"/><path d="M10 21.5h9" stroke="#4a6a5a" stroke-width="2"/><path d="M14.5 19v2" stroke="#333" stroke-width="2"/></g>
<g transform="translate(145,0)"><path d="M5 6.5c2-2 6-2 9-1.5h2c2 0 4 2 5 4l-1 0.5c-1-1.5-3-2-4-2h-1v1h-4v-1c-2 0-4 0-6 1z" fill="#1a1a1a"/><rect x="12.2" y="8" width="2.6" height="10" fill="#a03a3a" stroke="#3a1a1a" stroke-width="0.6"/><path d="M12 17h3l0.5 4.5h-4z" fill="#111"/><rect x="12" y="5" width="3" height="2.5" fill="#ddd"/></g>
</svg>
<div style="position:absolute;left:924px;top:122px;width:23px;height:23px;background:#f2c94c;border-left:1px solid #6a5a30;border-top:1px solid #6a5a30;border-right:1px solid #f6f0d8;border-bottom:1px solid #f6f0d8"><svg width="21" height="21" style="position:absolute;left:0;top:0"><defs><radialGradient id="sg" cx="0.4" cy="0.4" r="0.6"><stop offset="0" stop-color="#dff0f0"/><stop offset="0.5" stop-color="#707890"/><stop offset="1" stop-color="#202020"/></radialGradient></defs><circle cx="10.5" cy="10.5" r="6.5" fill="url(#sg)"/></svg></div>
<svg style="position:absolute;left:950px;top:122px" width="140" height="24">
<g transform="translate(0,0)"><rect x="2" y="5" width="9" height="10" fill="#e0e0e0" stroke="#777"/><path d="M9 9l5-8 4 9" fill="none" stroke="#222"/><circle cx="11" cy="15" r="5" fill="#fff" stroke="#222" stroke-width="1.3"/><circle cx="11" cy="15" r="1" fill="#222"/></g>
<g transform="translate(25,0)"><path d="M9 12l8 5-3 4z" fill="#f4f0a0" opacity="0.9"/><path d="M1.5 5l3-3 6 7-3 3z" fill="#e8e8e8" stroke="#222" stroke-width="1.1"/><path d="M7.5 12l3-3 1.5 2-2.5 2.5z" fill="#222"/><path d="M11 12l7 7" stroke="#222" stroke-width="1"/></g>
<g transform="translate(48,0)"><circle cx="5" cy="6" r="2.8" fill="#fff" stroke="#111" stroke-width="1.6"/><circle cx="12" cy="6" r="2.8" fill="#fff" stroke="#111" stroke-width="1.6"/><rect x="2.5" y="10" width="11" height="6" fill="#111"/><path d="M13.5 12l3.5-2v6l-3.5-2z" fill="#111"/><rect x="5" y="11.5" width="6" height="3" fill="#c8c0c0"/><rect x="5" y="16" width="5" height="2" fill="#666"/></g>
<g transform="translate(72,0)"><rect x="2.5" y="6.5" width="10" height="9" rx="1" fill="#e4e4ec" stroke="#8a7a8a"/><circle cx="7.5" cy="10.5" r="3" fill="#fff" stroke="#aaa"/><path d="M12 16h6" stroke="#7a4a4a" stroke-width="1"/></g>
<g transform="translate(96,0)"><path d="M2 8c3-3 5 3 8 0s5-3 8 0M2 12c3-3 5 3 8 0s5-3 8 0M2 16c3-3 5 3 8 0s5-3 8 0" stroke="#3a3a4a" fill="none" stroke-width="1"/></g>
<g transform="translate(119,0)"><polygon points="12.50,8.00 12.40,8.98 10.46,9.22 10.16,9.78 11.04,11.54 10.28,12.16 8.72,10.96 8.12,11.14 7.50,13.00 6.52,12.90 6.28,10.96 5.72,10.66 3.96,11.54 3.34,10.78 4.54,9.22 4.36,8.62 2.50,8.00 2.60,7.02 4.54,6.78 4.84,6.22 3.96,4.46 4.72,3.84 6.28,5.04 6.88,4.86 7.50,3.00 8.48,3.10 8.72,5.04 9.28,5.34 11.04,4.46 11.66,5.22 10.46,6.78 10.64,7.38" fill="#3a3a3a"/><circle cx="7.5" cy="8" r="1.3" fill="#c4c4c4"/><polygon points="20.00,14.50 19.88,15.77 17.20,16.03 16.83,16.72 18.10,19.10 17.11,19.90 15.03,18.20 14.28,18.42 13.50,21.00 12.23,20.88 11.97,18.20 11.28,17.83 8.90,19.10 8.10,18.11 9.80,16.03 9.58,15.28 7.00,14.50 7.12,13.23 9.80,12.97 10.17,12.28 8.90,9.90 9.89,9.10 11.97,10.80 12.72,10.58 13.50,8.00 14.77,8.12 15.03,10.80 15.72,11.17 18.10,9.90 18.90,10.89 17.20,12.97 17.42,13.72" fill="#111"/><circle cx="13.5" cy="14.5" r="1.8" fill="#c4c4c4"/></g>
</svg>
<div style="position:absolute;left:924px;top:151px;width:162px;height:21px;background:#e6e6e6;border:1px solid;border-color:#6e6e6e #f4f4f4 #f4f4f4 #6e6e6e;box-shadow:inset 1px 1px 0 #3a3a3a"></div>
<div style="position:absolute;left:929px;top:156px;font-size:11px;color:#000;font-weight:400;white-space:pre;line-height:1;letter-spacing:-0.3px">Standard Primitives</div>
<div style="position:absolute;left:1068px;top:153px;width:16px;height:17px;background:#dcdcdc;border:1px solid;border-color:#f4f4f4 #808080 #808080 #f4f4f4"><svg width="14" height="15" style="position:absolute;left:0;top:0"><path d="M3 6h8l-4 4z" fill="#000"/></svg></div>
<div style="position:absolute;left:919px;top:192px;width:166px;height:134px;border:1px solid;border-color:#808080 #f4f4f4 #f4f4f4 #808080"></div>
<div style="position:absolute;left:923px;top:184px;width:158px;height:16px;background:#b4b4b4;border:1px solid #222"></div>
<div style="position:absolute;left:929px;top:187px;font-size:11px;color:#000;font-weight:400;white-space:pre;line-height:1;">-</div>
<div style="position:absolute;left:973px;top:187px;font-size:11px;color:#000;font-weight:400;white-space:pre;line-height:1;">Object Type</div>
<div style="position:absolute;left:954px;top:203px;width:12px;height:13px;border:1px solid;border-color:#909090 #fff #fff #909090;box-shadow:inset 1px 1px 0 #a8a8a8"></div>
<div style="position:absolute;left:977px;top:204px;font-size:11px;color:#8c8c8c;font-weight:400;white-space:pre;line-height:1;">AutoGrid</div>
<div class="btn" style="left:930px;top:220px;width:68px;height:18px;line-height:16px">Box</div>
<div class="btn" style="left:1007px;top:220px;width:68px;height:18px;line-height:16px">Cone</div>
<div class="btn" style="left:930px;top:241px;width:68px;height:18px;line-height:16px">Sphere</div>
<div class="btn" style="left:1007px;top:241px;width:68px;height:18px;line-height:16px">GeoSphere</div>
<div class="btn" style="left:930px;top:262px;width:68px;height:18px;line-height:16px">Cylinder</div>
<div class="btn" style="left:1007px;top:262px;width:68px;height:18px;line-height:16px">Tube</div>
<div class="btn" style="left:930px;top:283px;width:68px;height:18px;line-height:16px">Torus</div>
<div class="btn" style="left:1007px;top:283px;width:68px;height:18px;line-height:16px">Pyramid</div>
<div class="btn" style="left:930px;top:304px;width:68px;height:18px;line-height:16px">Teapot</div>
<div class="btn" style="left:1007px;top:304px;width:68px;height:18px;line-height:16px">Plane</div>
<div style="position:absolute;left:917px;top:329px;width:177px;height:1px;background:#f0f0f0"></div>
<div style="position:absolute;left:919px;top:341px;width:166px;height:43px;border:1px solid;border-color:#808080 #f4f4f4 #f4f4f4 #808080"></div>
<div style="position:absolute;left:923px;top:333px;width:158px;height:16px;background:#b4b4b4;border:1px solid #222"></div>
<div style="position:absolute;left:929px;top:336px;font-size:11px;color:#000;font-weight:400;white-space:pre;line-height:1;">-</div>
<div style="position:absolute;left:964px;top:336px;font-size:11px;color:#000;font-weight:400;white-space:pre;line-height:1;letter-spacing:-0.3px">Name and Color</div>
<div style="position:absolute;left:927px;top:356px;width:131px;height:20px;background:#e4e4e4;border:1px solid;border-color:#3a3a3a #f4f4f4 #f4f4f4 #3a3a3a"></div>
<div style="position:absolute;left:1062px;top:356px;width:16px;height:20px;background:#9b0f3c;border:1px solid;border-color:#f4f4f4 #606060 #606060 #f4f4f4"></div>
<svg style="position:absolute;left:0;top:0" width="912" height="904" shape-rendering="crispEdges"><rect x="227.5" y="260.5" width="3" height="90" fill="none" stroke="#e8b0e0" stroke-width="1"/><rect x="685.5" y="177.5" width="7" height="112" fill="none" stroke="#ecc4ec" stroke-width="1"/><path d="M686.5 178v111" stroke="#e0a0dc" stroke-width="1"/><rect x="168.5" y="588.5" width="180" height="112" fill="none" stroke="#e8b8e4" stroke-width="1"/><rect x="169.5" y="589.5" width="177" height="110" fill="none" stroke="#8a6a88" stroke-width="1"/><rect x="170.5" y="590.5" width="175" height="108" fill="none" stroke="#8a6a88" stroke-width="1"/><rect x="171.5" y="591.5" width="173" height="106" fill="none" stroke="#e8a8e0" stroke-width="1"/></svg>
<svg style="position:absolute;left:15px;top:434px" width="50" height="40"><path d="M12.5 32V6" stroke="#30a030" stroke-width="1"/><path d="M12 32.5H38" stroke="#b01828" stroke-width="1"/><text x="12" y="4" font-size="10" font-weight="700" font-family="Liberation Sans" fill="#30a030">y</text><text x="13" y="29" font-size="10" font-family="Liberation Sans" fill="#18188a">z</text><text x="38" y="29" font-size="10" font-family="Liberation Sans" fill="#b01828">x</text></svg>
<svg style="position:absolute;left:473px;top:434px" width="50" height="40"><path d="M12.5 32V6" stroke="#18188a" stroke-width="1"/><path d="M12 32.5H38" stroke="#b01828" stroke-width="1"/><text x="12" y="4" font-size="10" font-weight="700" font-family="Liberation Sans" fill="#18188a">z</text><text x="13" y="29" font-size="10" font-family="Liberation Sans" fill="#30a030">y</text><text x="38" y="29" font-size="10" font-family="Liberation Sans" fill="#b01828">x</text></svg>
<svg style="position:absolute;left:0;top:840px" width="60" height="45"><path d="M27.5 36V12" stroke="#18188a" stroke-width="1"/><path d="M5 36.5H27" stroke="#30a030" stroke-width="1"/><text x="26" y="9" font-size="10" font-family="Liberation Sans" fill="#18188a">z</text><text x="4" y="33" font-size="10" font-family="Liberation Sans" fill="#30a030">y</text><text x="26" y="33" font-size="10" font-family="Liberation Sans" fill="#b01828">x</text></svg>
<svg style="position:absolute;left:460px;top:498px" width="450" height="404"><g stroke="#909090" stroke-width="1" fill="none" id="fg"></g></svg>
<svg style="position:absolute;left:460px;top:498px" width="450" height="404"><path d="M24.0 235.0L150.0 338.0M24.0 235.0L192.0 152.0M34.5 229.8L160.0 331.6M31.9 241.4L199.4 157.2M45.0 224.6L170.0 325.1M39.8 247.9L206.8 162.4M55.5 219.4L180.0 318.7M47.6 254.3L214.1 167.6M66.0 214.2L190.0 312.2M55.5 260.8L221.5 172.8M76.5 209.1L200.0 305.8M63.4 267.2L228.9 177.9M87.0 203.9L210.0 299.4M71.2 273.6L236.2 183.1M97.5 198.7L220.0 292.9M79.1 280.1L243.6 188.3M108.0 193.5L230.0 286.5M87.0 286.5L251.0 193.5M118.5 188.3L240.0 280.1M94.9 292.9L258.4 198.7M129.0 183.1L250.0 273.6M102.8 299.4L265.8 203.9M139.5 177.9L260.0 267.2M110.6 305.8L273.1 209.1M150.0 172.8L270.0 260.8M118.5 312.2L280.5 214.2M160.5 167.6L280.0 254.3M126.4 318.7L287.9 219.4M171.0 162.4L290.0 247.9M134.2 325.1L295.2 224.6M181.5 157.2L300.0 241.4M142.1 331.6L302.6 229.8M192.0 152.0L310.0 235.0M150.0 338.0L310.0 235.0" stroke="#6c6c6c" stroke-width="1.1" fill="none"/><path d="M80 280L167 236M109 199L130 212" stroke="#111" stroke-width="1.2"/><polygon points="300.7,148.3 308.0,145.4 294.8,306.0 289.0,307.8" fill="#5e5e5e"/><path d="M300.7 148.3L308.0 145.4" stroke="#8a8a8a" stroke-width="1.2"/><polygon points="108.6,78.4 300.7,148.3 289.0,307.8 123.3,207.8" fill="#1d1d1d" stroke="#141414" stroke-width="1"/><path d="M284.5 301.5L127.5 202.5L113.5 84.5" fill="none" stroke="#585858" stroke-width="1.6"/><path d="M113.5 84.5L295.5 151.5L284.5 301.5" fill="none" stroke="#080808" stroke-width="1.3"/><path d="M25 378V354" stroke="#18188a" stroke-width="1.2"/><path d="M25 378L43 369" stroke="#b01828" stroke-width="1.2"/><path d="M25 378L9 369" stroke="#30a030" stroke-width="1.2"/><text x="22" y="353" font-size="10" font-family="Liberation Sans" fill="#18188a">z</text><text x="44" y="367" font-size="10" font-family="Liberation Sans" fill="#b01828">x</text><text x="6" y="367" font-size="10" font-family="Liberation Sans" fill="#30a030">y</text></svg>
<div style="position:absolute;left:528px;top:438px;width:224px;height:122px;background:#2a2a2a;border-radius:7px 7px 0 0"></div>
<div style="position:absolute;left:529px;top:439px;width:222px;height:29px;background:linear-gradient(#7a7a7a 0px,#626262 6px,#484848 13px,#2e2e2e 15px,#1c1c1c 28px);border-radius:6px 6px 0 0"></div>
<div style="position:absolute;left:536px;top:448px;font-size:12px;font-weight:700;color:#fff;white-space:pre;line-height:14px;letter-spacing:0.6px;text-shadow:0 0 1px #000,0 0 2px #000;transform-origin:0 0;transform:scaleX(1.146)">Export Scene to .3D...</div>
<div style="position:absolute;left:702px;top:444px;width:21px;height:20px;background:linear-gradient(#6a6a6a,#4a4a4a 50%,#333);border:1px solid #111;border-radius:3px;box-shadow:inset 0 0 0 1px rgba(255,255,255,0.4)"><div style="position:absolute;left:4px;top:1px;font-size:15px;font-weight:700;color:#fff;line-height:16px">?</div></div>
<div style="position:absolute;left:726px;top:444px;width:21px;height:20px;background:linear-gradient(#f09070,#d8461e 55%,#e06038);border:1px solid #111;border-radius:3px;box-shadow:inset 0 0 0 1px rgba(255,255,255,0.5)"><svg width="19" height="18" style="position:absolute;left:0;top:0"><path d="M5 4l9 10M14 4l-9 10" stroke="#fff" stroke-width="2"/></svg></div>
<div style="position:absolute;left:531px;top:469px;width:218px;height:88px;background:#c9c9c9"></div>
<div style="position:absolute;left:543px;top:487px;width:13px;height:13px;background:#e8e8e8;border:1px solid;border-color:#808080 #fff #fff #808080;box-shadow:inset 1px 1px 0 #404040"><svg width="11" height="11" style="position:absolute;left:0;top:0"><path d="M2 5l2.5 2.5 5-5" stroke="#000" stroke-width="2" fill="none"/></svg></div>
<div style="position:absolute;left:561px;top:484px;font-size:11px;color:#000;font-weight:400;white-space:pre;line-height:1;letter-spacing:-0.2px">Preserve MAX's Texture Coordinates</div>
<div class="btn" style="left:556px;top:520px;width:71px;height:26px;line-height:24px;font-size:11px;border-color:#fff #404040 #404040 #fff"><div style="position:absolute;left:3px;top:3px;right:3px;bottom:3px;border:1px dotted #000"></div>OK</div>
<div class="btn" style="left:651px;top:520px;width:72px;height:26px;line-height:24px;font-size:11px">Cancel</div>
<div style="position:absolute;left:0px;top:904px;width:912px;height:46px;background:#c4c4c4"></div>
<div style="position:absolute;left:0px;top:904px;width:15px;height:17px;background:#cacaca;border:1px solid;border-color:#f4f4f4 #808080 #808080 #f4f4f4"><svg width="13" height="15" style="position:absolute;left:0;top:0"><path d="M8 3l-4 4.5 4 4.5" stroke="#000" fill="none" stroke-width="1.1"/></svg></div>
<div style="position:absolute;left:16px;top:904px;width:125px;height:18px;background:#c4c4c4;border:1px solid;border-color:#f4f4f4 #303030 #303030 #f4f4f4;box-shadow:inset -1px -1px 0 #808080"></div>
<div style="position:absolute;left:61px;top:907px;font-size:11px;color:#000;font-weight:400;white-space:pre;line-height:1;">0 / 100</div>
<div style="position:absolute;left:142px;top:904px;width:15px;height:17px;background:#cacaca;border:1px solid;border-color:#f4f4f4 #808080 #808080 #f4f4f4"><svg width="13" height="15" style="position:absolute;left:0;top:0"><path d="M5 3l4 4.5-4 4.5" stroke="#000" fill="none" stroke-width="1.1"/></svg></div>
<div style="position:absolute;left:157px;top:904px;width:755px;height:18px;background:#cbcbcb"></div>
<div style="position:absolute;left:0px;top:922px;width:912px;height:1px;background:#f4f4f4"></div>
<div style="position:absolute;left:0px;top:923px;width:912px;height:1px;background:#8a8a8a"></div>
<div style="position:absolute;left:0px;top:948px;width:912px;height:1px;background:#f4f4f4"></div>
<svg style="position:absolute;left:0;top:923px" width="912" height="27"><rect x="50.5" y="0.5" width="8" height="25" fill="#a4b6cc" stroke="#7890b0"/><path d="M62.5 1v11" stroke="#6a6a6a" stroke-width="1"/><path d="M63.5 1v11" stroke="#d4d4d4" stroke-width="1"/><path d="M70.5 1v11" stroke="#6a6a6a" stroke-width="1"/><path d="M71.5 1v11" stroke="#d4d4d4" stroke-width="1"/><path d="M79.5 1v11" stroke="#6a6a6a" stroke-width="1"/><path d="M80.5 1v11" stroke="#d4d4d4" stroke-width="1"/><path d="M87.5 1v11" stroke="#6a6a6a" stroke-width="1"/><path d="M88.5 1v11" stroke="#d4d4d4" stroke-width="1"/><path d="M95.5 1v11" stroke="#6a6a6a" stroke-width="1"/><path d="M96.5 1v11" stroke="#d4d4d4" stroke-width="1"/><path d="M103.5 1v11" stroke="#6a6a6a" stroke-width="1"/><path d="M104.5 1v11" stroke="#d4d4d4" stroke-width="1"/><path d="M111.5 1v11" stroke="#6a6a6a" stroke-width="1"/><path d="M112.5 1v11" stroke="#d4d4d4" stroke-width="1"/><path d="M119.5 1v11" stroke="#6a6a6a" stroke-width="1"/><path d="M120.5 1v11" stroke="#d4d4d4" stroke-width="1"/><path d="M127.5 1v11" stroke="#6a6a6a" stroke-width="1"/><path d="M128.5 1v11" stroke="#d4d4d4" stroke-width="1"/><path d="M135.5 1v11" stroke="#6a6a6a" stroke-width="1"/><path d="M136.5 1v11" stroke="#d4d4d4" stroke-width="1"/><path d="M143.5 1v11" stroke="#6a6a6a" stroke-width="1"/><path d="M144.5 1v11" stroke="#d4d4d4" stroke-width="1"/><path d="M151.5 1v11" stroke="#6a6a6a" stroke-width="1"/><path d="M152.5 1v11" stroke="#d4d4d4" stroke-width="1"/><path d="M159.5 1v11" stroke="#6a6a6a" stroke-width="1"/><path d="M160.5 1v11" stroke="#d4d4d4" stroke-width="1"/><path d="M167.5 1v11" stroke="#6a6a6a" stroke-width="1"/><path d="M168.5 1v11" stroke="#d4d4d4" stroke-width="1"/><path d="M175.5 1v11" stroke="#6a6a6a" stroke-width="1"/><path d="M176.5 1v11" stroke="#d4d4d4" stroke-width="1"/><path d="M183.5 1v11" stroke="#6a6a6a" stroke-width="1"/><path d="M184.5 1v11" stroke="#d4d4d4" stroke-width="1"/><path d="M191.5 1v11" stroke="#6a6a6a" stroke-width="1"/><path d="M192.5 1v11" stroke="#d4d4d4" stroke-width="1"/><path d="M199.5 1v11" stroke="#6a6a6a" stroke-width="1"/><path d="M200.5 1v11" stroke="#d4d4d4" stroke-width="1"/><path d="M207.5 1v11" stroke="#6a6a6a" stroke-width="1"/><path d="M208.5 1v11" stroke="#d4d4d4" stroke-width="1"/><path d="M215.5 1v11" stroke="#6a6a6a" stroke-width="1"/><path d="M216.5 1v11" stroke="#d4d4d4" stroke-width="1"/><path d="M223.5 1v11" stroke="#6a6a6a" stroke-width="1"/><path d="M224.5 1v11" stroke="#d4d4d4" stroke-width="1"/><path d="M231.5 1v11" stroke="#6a6a6a" stroke-width="1"/><path d="M232.5 1v11" stroke="#d4d4d4" stroke-width="1"/><path d="M239.5 1v11" stroke="#6a6a6a" stroke-width="1"/><path d="M240.5 1v11" stroke="#d4d4d4" stroke-width="1"/><path d="M247.5 1v11" stroke="#6a6a6a" stroke-width="1"/><path d="M248.5 1v11" stroke="#d4d4d4" stroke-width="1"/><path d="M255.5 1v11" stroke="#6a6a6a" stroke-width="1"/><path d="M256.5 1v11" stroke="#d4d4d4" stroke-width="1"/><path d="M263.5 1v11" stroke="#6a6a6a" stroke-width="1"/><path d="M264.5 1v11" stroke="#d4d4d4" stroke-width="1"/><path d="M271.5 1v11" stroke="#6a6a6a" stroke-width="1"/><path d="M272.5 1v11" stroke="#d4d4d4" stroke-width="1"/><path d="M280.5 1v11" stroke="#6a6a6a" stroke-width="1"/><path d="M281.5 1v11" stroke="#d4d4d4" stroke-width="1"/><path d="M288.5 1v11" stroke="#6a6a6a" stroke-width="1"/><path d="M289.5 1v11" stroke="#d4d4d4" stroke-width="1"/><path d="M296.5 1v11" stroke="#6a6a6a" stroke-width="1"/><path d="M297.5 1v11" stroke="#d4d4d4" stroke-width="1"/><path d="M304.5 1v11" stroke="#6a6a6a" stroke-width="1"/><path d="M305.5 1v11" stroke="#d4d4d4" stroke-width="1"/><path d="M312.5 1v11" stroke="#6a6a6a" stroke-width="1"/><path d="M313.5 1v11" stroke="#d4d4d4" stroke-width="1"/><path d="M320.5 1v11" stroke="#6a6a6a" stroke-width="1"/><path d="M321.5 1v11" stroke="#d4d4d4" stroke-width="1"/><path d="M328.5 1v11" stroke="#6a6a6a" stroke-width="1"/><path d="M329.5 1v11" stroke="#d4d4d4" stroke-width="1"/><path d="M336.5 1v11" stroke="#6a6a6a" stroke-width="1"/><path d="M337.5 1v11" stroke="#d4d4d4" stroke-width="1"/><path d="M344.5 1v11" stroke="#6a6a6a" stroke-width="1"/><path d="M345.5 1v11" stroke="#d4d4d4" stroke-width="1"/><path d="M352.5 1v11" stroke="#6a6a6a" stroke-width="1"/><path d="M353.5 1v11" stroke="#d4d4d4" stroke-width="1"/><path d="M360.5 1v11" stroke="#6a6a6a" stroke-width="1"/><path d="M361.5 1v11" stroke="#d4d4d4" stroke-width="1"/><path d="M368.5 1v11" stroke="#6a6a6a" stroke-width="1"/><path d="M369.5 1v11" stroke="#d4d4d4" stroke-width="1"/><path d="M376.5 1v11" stroke="#6a6a6a" stroke-width="1"/><path d="M377.5 1v11" stroke="#d4d4d4" stroke-width="1"/><path d="M384.5 1v11" stroke="#6a6a6a" stroke-width="1"/><path d="M385.5 1v11" stroke="#d4d4d4" stroke-width="1"/><path d="M392.5 1v11" stroke="#6a6a6a" stroke-width="1"/><path d="M393.5 1v11" stroke="#d4d4d4" stroke-width="1"/><path d="M400.5 1v11" stroke="#6a6a6a" stroke-width="1"/><path d="M401.5 1v11" stroke="#d4d4d4" stroke-width="1"/><path d="M408.5 1v11" stroke="#6a6a6a" stroke-width="1"/><path d="M409.5 1v11" stroke="#d4d4d4" stroke-width="1"/><path d="M416.5 1v11" stroke="#6a6a6a" stroke-width="1"/><path d="M417.5 1v11" stroke="#d4d4d4" stroke-width="1"/><path d="M424.5 1v11" stroke="#6a6a6a" stroke-width="1"/><path d="M425.5 1v11" stroke="#d4d4d4" stroke-width="1"/><path d="M432.5 1v11" stroke="#6a6a6a" stroke-width="1"/><path d="M433.5 1v11" stroke="#d4d4d4" stroke-width="1"/><path d="M440.5 1v11" stroke="#6a6a6a" stroke-width="1"/><path d="M441.5 1v11" stroke="#d4d4d4" stroke-width="1"/><path d="M448.5 1v11" stroke="#6a6a6a" stroke-width="1"/><path d="M449.5 1v11" stroke="#d4d4d4" stroke-width="1"/><path d="M456.5 1v11" stroke="#6a6a6a" stroke-width="1"/><path d="M457.5 1v11" stroke="#d4d4d4" stroke-width="1"/><path d="M464.5 1v11" stroke="#6a6a6a" stroke-width="1"/><path d="M465.5 1v11" stroke="#d4d4d4" stroke-width="1"/><path d="M472.5 1v11" stroke="#6a6a6a" stroke-width="1"/><path d="M473.5 1v11" stroke="#d4d4d4" stroke-width="1"/><path d="M481.5 1v11" stroke="#6a6a6a" stroke-width="1"/><path d="M482.5 1v11" stroke="#d4d4d4" stroke-width="1"/><path d="M489.5 1v11" stroke="#6a6a6a" stroke-width="1"/><path d="M490.5 1v11" stroke="#d4d4d4" stroke-width="1"/><path d="M497.5 1v11" stroke="#6a6a6a" stroke-width="1"/><path d="M498.5 1v11" stroke="#d4d4d4" stroke-width="1"/><path d="M505.5 1v11" stroke="#6a6a6a" stroke-width="1"/><path d="M506.5 1v11" stroke="#d4d4d4" stroke-width="1"/><path d="M513.5 1v11" stroke="#6a6a6a" stroke-width="1"/><path d="M514.5 1v11" stroke="#d4d4d4" stroke-width="1"/><path d="M521.5 1v11" stroke="#6a6a6a" stroke-width="1"/><path d="M522.5 1v11" stroke="#d4d4d4" stroke-width="1"/><path d="M529.5 1v11" stroke="#6a6a6a" stroke-width="1"/><path d="M530.5 1v11" stroke="#d4d4d4" stroke-width="1"/><path d="M537.5 1v11" stroke="#6a6a6a" stroke-width="1"/><path d="M538.5 1v11" stroke="#d4d4d4" stroke-width="1"/><path d="M545.5 1v11" stroke="#6a6a6a" stroke-width="1"/><path d="M546.5 1v11" stroke="#d4d4d4" stroke-width="1"/><path d="M553.5 1v11" stroke="#6a6a6a" stroke-width="1"/><path d="M554.5 1v11" stroke="#d4d4d4" stroke-width="1"/><path d="M561.5 1v11" stroke="#6a6a6a" stroke-width="1"/><path d="M562.5 1v11" stroke="#d4d4d4" stroke-width="1"/><path d="M569.5 1v11" stroke="#6a6a6a" stroke-width="1"/><path d="M570.5 1v11" stroke="#d4d4d4" stroke-width="1"/><path d="M577.5 1v11" stroke="#6a6a6a" stroke-width="1"/><path d="M578.5 1v11" stroke="#d4d4d4" stroke-width="1"/><path d="M585.5 1v11" stroke="#6a6a6a" stroke-width="1"/><path d="M586.5 1v11" stroke="#d4d4d4" stroke-width="1"/><path d="M593.5 1v11" stroke="#6a6a6a" stroke-width="1"/><path d="M594.5 1v11" stroke="#d4d4d4" stroke-width="1"/><path d="M601.5 1v11" stroke="#6a6a6a" stroke-width="1"/><path d="M602.5 1v11" stroke="#d4d4d4" stroke-width="1"/><path d="M609.5 1v11" stroke="#6a6a6a" stroke-width="1"/><path d="M610.5 1v11" stroke="#d4d4d4" stroke-width="1"/><path d="M617.5 1v11" stroke="#6a6a6a" stroke-width="1"/><path d="M618.5 1v11" stroke="#d4d4d4" stroke-width="1"/><path d="M625.5 1v11" stroke="#6a6a6a" stroke-width="1"/><path d="M626.5 1v11" stroke="#d4d4d4" stroke-width="1"/><path d="M633.5 1v11" stroke="#6a6a6a" stroke-width="1"/><path d="M634.5 1v11" stroke="#d4d4d4" stroke-width="1"/><path d="M641.5 1v11" stroke="#6a6a6a" stroke-width="1"/><path d="M642.5 1v11" stroke="#d4d4d4" stroke-width="1"/><path d="M649.5 1v11" stroke="#6a6a6a" stroke-width="1"/><path d="M650.5 1v11" stroke="#d4d4d4" stroke-width="1"/><path d="M657.5 1v11" stroke="#6a6a6a" stroke-width="1"/><path d="M658.5 1v11" stroke="#d4d4d4" stroke-width="1"/><path d="M665.5 1v11" stroke="#6a6a6a" stroke-width="1"/><path d="M666.5 1v11" stroke="#d4d4d4" stroke-width="1"/><path d="M673.5 1v11" stroke="#6a6a6a" stroke-width="1"/><path d="M674.5 1v11" stroke="#d4d4d4" stroke-width="1"/><path d="M682.5 1v11" stroke="#6a6a6a" stroke-width="1"/><path d="M683.5 1v11" stroke="#d4d4d4" stroke-width="1"/><path d="M690.5 1v11" stroke="#6a6a6a" stroke-width="1"/><path d="M691.5 1v11" stroke="#d4d4d4" stroke-width="1"/><path d="M698.5 1v11" stroke="#6a6a6a" stroke-width="1"/><path d="M699.5 1v11" stroke="#d4d4d4" stroke-width="1"/><path d="M706.5 1v11" stroke="#6a6a6a" stroke-width="1"/><path d="M707.5 1v11" stroke="#d4d4d4" stroke-width="1"/><path d="M714.5 1v11" stroke="#6a6a6a" stroke-width="1"/><path d="M715.5 1v11" stroke="#d4d4d4" stroke-width="1"/><path d="M722.5 1v11" stroke="#6a6a6a" stroke-width="1"/><path d="M723.5 1v11" stroke="#d4d4d4" stroke-width="1"/><path d="M730.5 1v11" stroke="#6a6a6a" stroke-width="1"/><path d="M731.5 1v11" stroke="#d4d4d4" stroke-width="1"/><path d="M738.5 1v11" stroke="#6a6a6a" stroke-width="1"/><path d="M739.5 1v11" stroke="#d4d4d4" stroke-width="1"/><path d="M746.5 1v11" stroke="#6a6a6a" stroke-width="1"/><path d="M747.5 1v11" stroke="#d4d4d4" stroke-width="1"/><path d="M754.5 1v11" stroke="#6a6a6a" stroke-width="1"/><path d="M755.5 1v11" stroke="#d4d4d4" stroke-width="1"/><path d="M762.5 1v11" stroke="#6a6a6a" stroke-width="1"/><path d="M763.5 1v11" stroke="#d4d4d4" stroke-width="1"/><path d="M770.5 1v11" stroke="#6a6a6a" stroke-width="1"/><path d="M771.5 1v11" stroke="#d4d4d4" stroke-width="1"/><path d="M778.5 1v11" stroke="#6a6a6a" stroke-width="1"/><path d="M779.5 1v11" stroke="#d4d4d4" stroke-width="1"/><path d="M786.5 1v11" stroke="#6a6a6a" stroke-width="1"/><path d="M787.5 1v11" stroke="#d4d4d4" stroke-width="1"/><path d="M794.5 1v11" stroke="#6a6a6a" stroke-width="1"/><path d="M795.5 1v11" stroke="#d4d4d4" stroke-width="1"/><path d="M802.5 1v11" stroke="#6a6a6a" stroke-width="1"/><path d="M803.5 1v11" stroke="#d4d4d4" stroke-width="1"/><path d="M810.5 1v11" stroke="#6a6a6a" stroke-width="1"/><path d="M811.5 1v11" stroke="#d4d4d4" stroke-width="1"/><path d="M818.5 1v11" stroke="#6a6a6a" stroke-width="1"/><path d="M819.5 1v11" stroke="#d4d4d4" stroke-width="1"/><path d="M826.5 1v11" stroke="#6a6a6a" stroke-width="1"/><path d="M827.5 1v11" stroke="#d4d4d4" stroke-width="1"/><path d="M834.5 1v11" stroke="#6a6a6a" stroke-width="1"/><path d="M835.5 1v11" stroke="#d4d4d4" stroke-width="1"/><path d="M842.5 1v11" stroke="#6a6a6a" stroke-width="1"/><path d="M843.5 1v11" stroke="#d4d4d4" stroke-width="1"/><path d="M850.5 1v11" stroke="#6a6a6a" stroke-width="1"/><path d="M851.5 1v11" stroke="#d4d4d4" stroke-width="1"/><path d="M858.5 1v11" stroke="#6a6a6a" stroke-width="1"/><path d="M859.5 1v11" stroke="#d4d4d4" stroke-width="1"/><text x="54.4" y="23" font-size="12" font-family="Liberation Sans" text-anchor="middle" fill="#000">0</text><text x="134.8" y="23" font-size="12" font-family="Liberation Sans" text-anchor="middle" fill="#000">10</text><path d="M135.5 23v3" stroke="#444"/><text x="215.2" y="23" font-size="12" font-family="Liberation Sans" text-anchor="middle" fill="#000">20</text><path d="M215.5 23v3" stroke="#444"/><text x="295.6" y="23" font-size="12" font-family="Liberation Sans" text-anchor="middle" fill="#000">30</text><path d="M296.5 23v3" stroke="#444"/><text x="376.0" y="23" font-size="12" font-family="Liberation Sans" text-anchor="middle" fill="#000">40</text><path d="M376.5 23v3" stroke="#444"/><text x="456.4" y="23" font-size="12" font-family="Liberation Sans" text-anchor="middle" fill="#000">50</text><path d="M456.5 23v3" stroke="#444"/><text x="536.8" y="23" font-size="12" font-family="Liberation Sans" text-anchor="middle" fill="#000">60</text><path d="M537.5 23v3" stroke="#444"/><text x="617.2" y="23" font-size="12" font-family="Liberation Sans" text-anchor="middle" fill="#000">70</text><path d="M617.5 23v3" stroke="#444"/><text x="697.6" y="23" font-size="12" font-family="Liberation Sans" text-anchor="middle" fill="#000">80</text><path d="M698.5 23v3" stroke="#444"/><text x="778.0" y="23" font-size="12" font-family="Liberation Sans" text-anchor="middle" fill="#000">90</text><path d="M778.5 23v3" stroke="#444"/><text x="858.4" y="23" font-size="12" font-family="Liberation Sans" text-anchor="middle" fill="#000">100</text><path d="M858.5 23v3" stroke="#444"/><rect x="13.5" y="5.5" width="17" height="5" fill="none" stroke="#111"/><path d="M15 8c2-2 4 2 6 0s4 2 6 0" stroke="#111" fill="none" stroke-width="0.8"/><path d="M13 20.5h18M13 22.5h18" stroke="#111"/><path d="M17 18v-5M15 15l2-2 2 2M26 13v5M24 16l2 2 2-2" stroke="#111" fill="none"/></svg>
<div style="position:absolute;left:0px;top:949px;width:1280px;height:50px;background:#c4c4c4"></div>
<div style="position:absolute;left:0px;top:949px;width:912px;height:1px;background:#f0f0f0"></div>
<div style="position:absolute;left:2px;top:952px;width:96px;height:21px;background:#e4c8c8;border:1px solid;border-color:#808080 #fff #fff #808080"></div>
<div style="position:absolute;left:2px;top:975px;width:96px;height:22px;background:#ffffff;border:1px solid;border-color:#808080 #fff #fff #808080"></div>
<div style="position:absolute;left:103px;top:951px;width:1px;height:48px;background:#8a8a8a;box-shadow:1px 0 0 #f0f0f0"></div>
<div style="position:absolute;left:107px;top:953px;width:328px;height:21px;background:#c4c4c4;border:1px solid;border-color:#8a8a8a #f4f4f4 #f4f4f4 #8a8a8a"></div>
<div style="position:absolute;left:113px;top:959px;font-size:11px;color:#000;font-weight:400;white-space:pre;line-height:1;">None Selected</div>
<div style="position:absolute;left:107px;top:978px;width:603px;height:19px;background:#c4c4c4;border:1px solid;border-color:#8a8a8a #f4f4f4 #f4f4f4 #8a8a8a"></div>
<div style="position:absolute;left:113px;top:983px;font-size:11px;color:#000;font-weight:400;white-space:pre;line-height:1;letter-spacing:-0.13px">Click or click-and-drag to select objects</div>
<svg style="position:absolute;left:440px;top:954px" width="20" height="18"><path d="M6 8V6a3 3 0 0 1 6 0v2" fill="none" stroke="#111" stroke-width="1.5"/><rect x="4" y="8" width="10" height="7" fill="#111"/><path d="M5 10.5h8M5 12.5h8" stroke="#bbb"/></svg>
<svg style="position:absolute;left:467px;top:954px" width="17" height="17"><rect x="1.5" y="1.5" width="14" height="14" fill="none" stroke="#111"/><circle cx="8.5" cy="8.5" r="2.3" fill="none" stroke="#111" stroke-width="1.4"/><path d="M8.5 2v4M8.5 11v4" stroke="#111"/></svg>
<div style="position:absolute;left:490px;top:958px;font-size:12px;color:#000;font-weight:400;white-space:pre;line-height:1;">X:</div>
<div style="position:absolute;left:501px;top:954px;width:57px;height:20px;background:#dadada;border:1px solid;border-color:#1a1a1a #f4f4f4 #f4f4f4 #1a1a1a;box-shadow:inset 1px 1px 0 #808080"></div>
<div style="position:absolute;left:505px;top:958px;font-size:11px;color:#6e6e6e;font-weight:400;white-space:pre;line-height:1;">346,515</div>
<div style="position:absolute;left:572px;top:958px;font-size:12px;color:#000;font-weight:400;white-space:pre;line-height:1;">Y:</div>
<div style="position:absolute;left:583px;top:954px;width:57px;height:20px;background:#dadada;border:1px solid;border-color:#1a1a1a #f4f4f4 #f4f4f4 #1a1a1a;box-shadow:inset 1px 1px 0 #808080"></div>
<div style="position:absolute;left:587px;top:958px;font-size:11px;color:#6e6e6e;font-weight:400;white-space:pre;line-height:1;">498,123</div>
<div style="position:absolute;left:654px;top:958px;font-size:12px;color:#000;font-weight:400;white-space:pre;line-height:1;">Z:</div>
<div style="position:absolute;left:666px;top:954px;width:57px;height:20px;background:#dadada;border:1px solid;border-color:#1a1a1a #f4f4f4 #f4f4f4 #1a1a1a;box-shadow:inset 1px 1px 0 #808080"></div>
<div style="position:absolute;left:669px;top:958px;font-size:11px;color:#6e6e6e;font-weight:400;white-space:pre;line-height:1;">0,0</div>
<div style="position:absolute;left:710px;top:978px;width:1px;height:19px;background:#8a8a8a;box-shadow:1px 0 0 #f0f0f0"></div>
<svg style="position:absolute;left:713px;top:978px" width="18" height="18"><circle cx="8" cy="9" r="5" fill="#d8d8d8" stroke="#aaa"/><path d="M5 14l3-5 3 5" stroke="#aaa" fill="none"/></svg>
<div style="position:absolute;left:737px;top:953px;width:100px;height:21px;background:#c4c4c4;border:1px solid;border-color:#8a8a8a #f4f4f4 #f4f4f4 #8a8a8a"></div>
<div style="position:absolute;left:743px;top:958px;font-size:11px;color:#000;font-weight:400;white-space:pre;line-height:1;letter-spacing:-0.3px">Grid = 10,0</div>
<div style="position:absolute;left:737px;top:978px;width:100px;height:19px;background:#c4c4c4;border:1px solid;border-color:#8a8a8a #f4f4f4 #f4f4f4 #8a8a8a"></div>
<div style="position:absolute;left:743px;top:982px;font-size:11px;color:#000;font-weight:400;white-space:pre;line-height:1;">Add Time Tag</div>
<div style="position:absolute;left:839px;top:952px;width:43px;height:45px;background:#c4c4c4;border:1px solid;border-color:#f4f4f4 #6e6e6e #6e6e6e #f4f4f4"></div>
<svg style="position:absolute;left:845px;top:964px" width="32" height="20"><circle cx="7" cy="9" r="4.5" fill="none" stroke="#000" stroke-width="2.5"/><path d="M11 9h17M22 9v4M26 9v4" stroke="#000" stroke-width="2.5"/></svg>
<div class="btn" style="left:885px;top:952px;width:47px;height:21px;line-height:19px;font-size:11px">Auto Key</div>
<div class="btn" style="left:885px;top:975px;width:47px;height:21px;line-height:19px;font-size:11px;letter-spacing:-0.3px">Set Key</div>
<div style="position:absolute;left:936px;top:953px;width:114px;height:18px;background:#e6e6e6;border:1px solid;border-color:#6e6e6e #f4f4f4 #f4f4f4 #6e6e6e;box-shadow:inset 1px 1px 0 #3a3a3a"></div>
<div style="position:absolute;left:940px;top:956px;font-size:11px;color:#000;font-weight:400;white-space:pre;line-height:1;letter-spacing:-0.2px">Selected</div>
<div style="position:absolute;left:1032px;top:955px;width:16px;height:14px;background:#e0e0e0;border:1px solid;border-color:#f4f4f4 #808080 #808080 #f4f4f4"><svg width="14" height="12" style="position:absolute;left:0;top:0"><path d="M3 4h8l-4 4z" fill="#000"/></svg></div>
<svg style="position:absolute;left:936px;top:976px" width="22" height="20"><path d="M2 15c3 0 4-12 7-12s3 12 6 12 3-8 5-8" fill="none" stroke="#c04050" stroke-width="1.2"/><path d="M7 4v14M12 4v14" stroke="#b0b0b0" stroke-width="0.5"/><path d="M17 17h3v-3z" fill="#000"/></svg>
<div class="btn" style="left:963px;top:975px;width:88px;height:21px;line-height:19px;font-size:11px;letter-spacing:-0.3px">Key Filters...</div>
<svg style="position:absolute;left:1055px;top:950px" width="225" height="49">
<g fill="#111">
<path d="M5 6h2v12H5zM7 12l6-6v12zM13 12l6-6v12z"/>
<path d="M33 12l5-5v10zM38 7h2v10h-2zM42 7h2v10h-2z"/>
<rect x="54.5" y="3.5" width="16" height="17" fill="none" stroke="#111" stroke-width="2.2"/><path d="M59 7l8 5-8 5z"/>
<path d="M78 7h2v10h-2zM82 7h2v10h-2zM85 7l6 5-6 5z"/>
<path d="M103 6l6 6-6 6zM109 6l6 6-6 6zM116 6h2v12h-2z"/>
<path d="M71 20h3v-3z"/>
<path d="M8 29h2v10H8zM10 34l4-4v8zM17 30l4 4-4 4zM21 29h2v10h-2z"/>
</g>
<path d="M79.5 26v18M131.5 2v18M131.5 26v18M27.5 2v18" stroke="#888"/>
<g fill="none" stroke="#222" stroke-width="1.4"><circle cx="137.5" cy="9.5" r="4.5" fill="#e8eef8"/></g><path d="M141 13l5 5" stroke="#2a2a70" stroke-width="2.6"/>
<g stroke="#b04040" fill="none" stroke-width="1"><rect x="160.5" y="3.5" width="11" height="10"/><path d="M166 3v10M160 8h11"/></g><circle cx="161" cy="13" r="3.6" fill="#e8eef8" stroke="#222" stroke-width="1.3"/><path d="M163.5 15.5l3 3" stroke="#2a2a70" stroke-width="2"/>
<g stroke="#2a2a60" fill="#d0d4f0" stroke-width="1.2"><path d="M183 9l4-3h8v9l-4 3h-8z"/><path d="M183 9h8v9M191 9l4-3" fill="none"/></g><path d="M180.5 4v4M180.5 4h4M197.5 20h-4M197.5 20v-4M180.5 20v-4M180.5 20h4M197.5 4v4M197.5 4h-4" stroke="#111" stroke-width="1.2"/>
<g stroke="#2a2a60" fill="#d0d4f0" stroke-width="1.2"><rect x="202.5" y="10.5" width="9" height="8"/></g><g stroke="#b04040" fill="none"><rect x="207.5" y="3.5" width="10" height="9"/><path d="M212 3v9M207 8h10"/></g>
<path d="M197 22h3v-3zM219 22h3v-3zM149 22h3v-3zM173 22h3v-3z" fill="#000"/>
<path d="M132 28l16 7-16 7" fill="none" stroke="#111" stroke-width="1.5"/><path d="M132 28v14" stroke="#888" stroke-width="1"/><path d="M133 32l4-3M133 36l7-5M133 40l9-6" stroke="#777" stroke-width="0.8"/>
<path d="M157 36c-1-3-1-6 1-6l2 3v-6c0-2 2-2 2 0v5-7c0-2 2-2 2 0v7-6c0-2 2-2 2 0v6-4c0-2 2-2 2 0v7c0 4-2 7-6 7-3 0-4-2-5-6z" fill="#f0f0f0" stroke="#111" stroke-width="1.1"/>
<g stroke="#2a2a60" fill="none" stroke-width="1.3"><ellipse cx="186" cy="36" rx="6" ry="4"/><path d="M186 29v13M179 36h14"/></g><circle cx="186" cy="31" r="2" fill="#d0d4f0" stroke="#223"/>
<rect x="203.5" y="28.5" width="11" height="11" fill="#d0d4f0" stroke="#223" stroke-width="1.3"/><rect x="208.5" y="33.5" width="9" height="9" fill="#d0d4f0" stroke="#223" stroke-width="1.3"/><path d="M206 31l6 6M206 31h3M206 31v3" stroke="#111"/>
<path d="M149 45h3v-3zM173 45h3v-3zM197 45h3v-3zM219 45h3v-3z" fill="#000"/>
</svg>
<div style="position:absolute;left:1084px;top:976px;width:63px;height:20px;background:#d8d8d8;border:1px solid;border-color:#1a1a1a #f4f4f4 #f4f4f4 #1a1a1a;box-shadow:inset 1px 1px 0 #808080"></div>
<div style="position:absolute;left:1089px;top:980px;font-size:12px;color:#000;font-weight:400;white-space:pre;line-height:1;">0</div>
<svg style="position:absolute;left:1147px;top:976px" width="10" height="20"><rect x="0.5" y="0.5" width="9" height="19" fill="#d4d4d4" stroke="#888"/><path d="M2 8l3-3 3 3zM2 12l3 3 3-3z" fill="#111"/></svg>
<svg style="position:absolute;left:1162px;top:976px" width="18" height="18"><rect x="1.5" y="2.5" width="12" height="12" fill="#e8e8e8" stroke="#333"/><path d="M1 5h13" stroke="#333"/><circle cx="12" cy="12" r="5" fill="#f0f0f0" stroke="#c03030" stroke-width="1.3"/><path d="M12 9v3h2" stroke="#c03030" fill="none"/></svg>
<div style="position:absolute;left:0px;top:999px;width:1280px;height:25px;background:linear-gradient(#2a2a2a 0px,#5a5a5a 1px,#3a3a3a 3px,#262626 10px,#141414 18px,#080808 25px)"></div>
<svg style="position:absolute;left:10px;top:1001px" width="26" height="22"><path d="M3 5c3-2 6-1 8 0v7c-2-1-5-2-8 0z" fill="#f0502a"/><path d="M12 5c3 1 5 1 8-1v7c-3 2-5 2-8 1z" fill="#6ab42a"/><path d="M2 13c3-2 6-1 8 0v7c-2-1-5-2-8 0z" fill="#2a8ae8"/><path d="M11 13c3 1 5 1 8-1v7c-3 2-5 2-8 1z" fill="#f8c818"/></svg>
<div style="position:absolute;left:47px;top:1002px;width:156px;height:22px;background:linear-gradient(#4a4a4a 0px,#383838 3px,#262626 12px,#1a1a1a 24px);border:1px solid #4a4a4a;border-radius:2px;border-bottom:none"></div>
<svg style="position:absolute;left:55px;top:1004px" width="18" height="18"><path d="M2 3h8l4 3v11H2z" fill="#e8d080" stroke="#a08030"/><circle cx="12" cy="5" r="3" fill="#c8d0d8" stroke="#777"/></svg>
<div style="position:absolute;left:75px;top:1007px;font-size:12px;color:#fff;font-weight:400;white-space:pre;line-height:1;letter-spacing:0.45px">D:\Documents an...</div>
<div style="position:absolute;left:207px;top:1002px;width:154px;height:22px;background:linear-gradient(#4a4a4a 0px,#383838 3px,#262626 12px,#1a1a1a 24px);border:1px solid #4a4a4a;border-radius:2px;border-bottom:none"></div>
<svg style="position:absolute;left:215px;top:1004px" width="18" height="18"><rect x="1" y="1" width="16" height="16" fill="#2a0a0a" stroke="#500"/><path d="M4 6h9l-2 7H6z" fill="#c01818"/></svg>
<div style="position:absolute;left:235px;top:1007px;font-size:12px;color:#fff;font-weight:400;white-space:pre;line-height:1;letter-spacing:0.45px">Garena</div>
<div style="position:absolute;left:365px;top:1002px;width:156px;height:22px;background:linear-gradient(#4a4a4a 0px,#383838 3px,#262626 12px,#1a1a1a 24px);border:1px solid #4a4a4a;border-radius:2px;border-bottom:none"></div>
<svg style="position:absolute;left:375px;top:1004px" width="18" height="18"><ellipse cx="9" cy="9" rx="6" ry="8" fill="#c01010"/><ellipse cx="9" cy="9" rx="2.5" ry="5.5" fill="#f8f0f0"/></svg>
<div style="position:absolute;left:393px;top:1007px;font-size:12px;color:#fff;font-weight:400;white-space:pre;line-height:1;letter-spacing:0.45px">БигБоард - Count...</div>
<div style="position:absolute;left:525px;top:1002px;width:158px;height:22px;background:linear-gradient(#101010,#0a0a0a);border:1px solid #555;border-radius:2px;border-bottom:none"></div>
<svg style="position:absolute;left:535px;top:1004px" width="17" height="17"><defs><linearGradient id="ai2" x1="0" y1="0" x2="1" y2="0.3"><stop offset="0" stop-color="#40c8a8"/><stop offset="0.6" stop-color="#1a7a6a"/><stop offset="1" stop-color="#0a2a24"/></linearGradient></defs><rect x="0.5" y="0.5" width="16" height="16" rx="2" fill="url(#ai2)"/><rect x="3.5" y="3.5" width="10" height="10" rx="3.5" fill="none" stroke="#c8fff0" stroke-width="1.6"/><path d="M11 6.5c-1-1-4-1-4.5 0.8s3.5 1.5 4 3.2-2.5 2-4.2 0.8" fill="none" stroke="#e8fff8" stroke-width="1.5"/></svg>
<div style="position:absolute;left:555px;top:1007px;font-size:12px;color:#fff;font-weight:400;white-space:pre;line-height:1;letter-spacing:0.45px">49.max       - Proj...</div>
<svg style="position:absolute;left:1125px;top:1001px" width="155" height="23"><path d="M12 8l-5 4.5 5 4.5z" fill="#fff"/><g transform="translate(20,1)"><circle cx="7.5" cy="10" r="7" fill="#d83a20"/><circle cx="7.5" cy="8" r="3" fill="#fff"/><circle cx="7.5" cy="8" r="1.5" fill="#3ab03a"/><path d="M1 15c3 3 10 3 13 0" stroke="#3ab03a" stroke-width="2.5" fill="none"/></g><g transform="translate(38,1)"><rect x="1" y="6" width="11" height="9" fill="#2a6ad8" stroke="#cde"/><rect x="7" y="2" width="10" height="9" fill="#2a5ab8" stroke="#9ac"/><path d="M3 17h8" stroke="#ccc" stroke-width="2"/></g><g transform="translate(58,1)"><path d="M2 1v18" stroke="#a08050" stroke-width="1.5"/><path d="M3 1l11 6-11 5z" fill="#d02020"/><circle cx="11" cy="14" r="4.5" fill="#5ab8e8"/></g><g transform="translate(74,3)"><rect x="0" y="2" width="15" height="4" fill="#fff"/><rect x="0" y="6" width="15" height="4" fill="#2a3ac8"/><rect x="0" y="10" width="15" height="4" fill="#d82020"/></g></svg>
<div style="position:absolute;left:1225px;top:1003px;font-size:16px;font-weight:700;color:#101070;white-space:pre;line-height:1;letter-spacing:-0.5px;text-shadow:1px 0 0 #e8e8ff,-1px 0 0 #e8e8ff,0 1px 0 #e8e8ff,0 -1px 0 #e8e8ff">21,</div>
<div style="position:absolute;left:1248px;top:1002px;font-size:13px;font-weight:700;color:#101070;white-space:pre;line-height:1;text-shadow:1px 0 0 #e8e8ff,-1px 0 0 #e8e8ff,0 1px 0 #e8e8ff,0 -1px 0 #e8e8ff">33</div>
<div style="position:absolute;left:1253px;top:1014px;font-size:9px;font-weight:700;color:#101070;white-space:pre;line-height:1;text-shadow:1px 0 0 #e8e8ff,-1px 0 0 #e8e8ff,0 1px 0 #e8e8ff,0 -1px 0 #e8e8ff">Сб</div>
</body></html>
